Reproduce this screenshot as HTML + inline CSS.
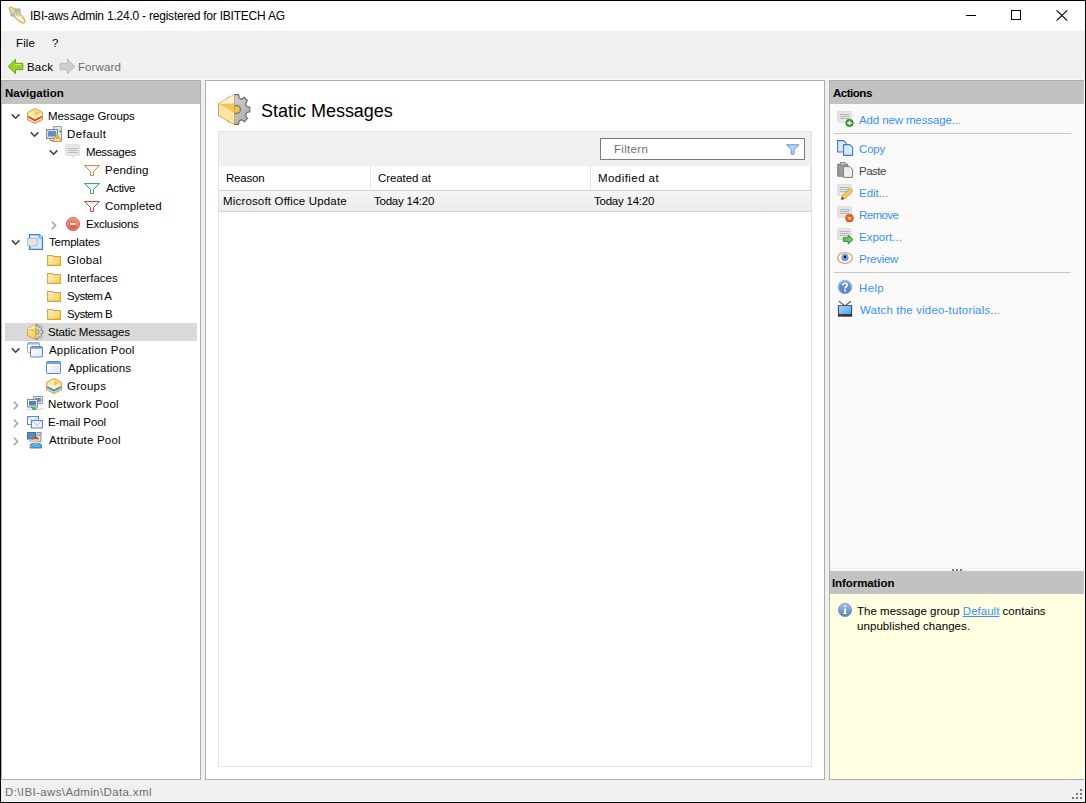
<!DOCTYPE html>
<html><head><meta charset="utf-8">
<style>
*{margin:0;padding:0;box-sizing:border-box}
html,body{width:1086px;height:803px;overflow:hidden}
body{position:relative;background:#f0f0f0;font-family:"Liberation Sans",sans-serif;font-size:11.5px;color:#000}
.a{position:absolute}
.t{position:absolute;white-space:nowrap;line-height:16px;font-size:11.5px}
.b{font-weight:bold}
svg.ov{position:absolute;overflow:visible}
</style></head><body>
<!-- title bar -->
<div class="a" style="left:1px;top:1px;width:1084px;height:30px;background:#fff"></div>

<div class="t" style="left:30px;top:8px;letter-spacing:-0.221px;font-size:12px;">IBI-aws Admin 1.24.0 - registered for IBITECH AG</div>

<div class="a" style="left:966px;top:15px;width:10px;height:1px;background:#000"></div>
<div class="a" style="left:1011px;top:10px;width:10px;height:10px;border:1px solid #000"></div>
<svg class="ov" style="left:1056px;top:10px" width="12" height="11" viewBox="0 0 12 11"><path d="M0.6 0.4L11.2 10.6M11.2 0.4L0.6 10.6" stroke="#000" stroke-width="1.15" fill="none"/></svg>

<div class="t" style="left:16px;top:35px;letter-spacing:0.133px;">File</div>
<div class="t" style="left:52px;top:35px;letter-spacing:0px;">?</div>
<div class="t" style="left:27px;top:59px;letter-spacing:0.167px;">Back</div>
<div class="t" style="left:78px;top:59px;letter-spacing:0.1px;color:#6d6d6d;">Forward</div>

<div class="a" style="left:1px;top:79px;width:1083px;height:1px;background:#f8f8f8"></div>
<!-- NAV PANEL -->
<div class="a" style="left:1px;top:80px;width:200px;height:700px;border:1px solid #acacac;background:#fff"></div>
<div class="a" style="left:2px;top:81px;width:198px;height:23px;background:#c2c2c2"></div>
<div class="a" style="left:5px;top:323px;width:192px;height:18px;background:#d9d9d9"></div>

<div class="t" style="left:5px;top:85px;letter-spacing:-0.011px;font-weight:bold;">Navigation</div>
<div class="t" style="left:48px;top:108px;letter-spacing:-0.054px;">Message Groups</div>
<div class="t" style="left:67px;top:126px;letter-spacing:0.417px;">Default</div>
<div class="t" style="left:86px;top:144px;letter-spacing:-0.314px;">Messages</div>
<div class="t" style="left:105px;top:162px;letter-spacing:0.217px;">Pending</div>
<div class="t" style="left:106px;top:180px;letter-spacing:-0.38px;">Active</div>
<div class="t" style="left:105px;top:198px;letter-spacing:0.138px;">Completed</div>
<div class="t" style="left:86px;top:216px;letter-spacing:-0.233px;">Exclusions</div>
<div class="t" style="left:49px;top:234px;letter-spacing:-0.188px;">Templates</div>
<div class="t" style="left:67px;top:252px;letter-spacing:0.32px;">Global</div>
<div class="t" style="left:67px;top:270px;letter-spacing:0.033px;">Interfaces</div>
<div class="t" style="left:67px;top:288px;letter-spacing:-0.514px;">System A</div>
<div class="t" style="left:67px;top:306px;letter-spacing:-0.514px;">System B</div>
<div class="t" style="left:48px;top:324px;letter-spacing:-0.171px;">Static Messages</div>
<div class="t" style="left:49px;top:342px;letter-spacing:0.193px;">Application Pool</div>
<div class="t" style="left:68px;top:360px;letter-spacing:0.1px;">Applications</div>
<div class="t" style="left:67px;top:378px;letter-spacing:0.26px;">Groups</div>
<div class="t" style="left:48px;top:396px;letter-spacing:0.2px;">Network Pool</div>
<div class="t" style="left:48px;top:414px;letter-spacing:-0.07px;">E-mail Pool</div>
<div class="t" style="left:49px;top:432px;letter-spacing:0.192px;">Attribute Pool</div>

<!-- MAIN PANEL -->
<div class="a" style="left:205px;top:80px;width:620px;height:700px;border:1px solid #acacac;background:#fff"></div>

<div class="t" style="left:261px;top:100px;letter-spacing:-0.014px;font-size:18px;line-height:22px;">Static Messages</div>

<div class="a" style="left:218px;top:131px;width:594px;height:636px;border:1px solid #e3e3e3;background:#fff"></div>
<div class="a" style="left:219px;top:132px;width:592px;height:34px;background:#f0f0f0"></div>
<div class="a" style="left:600px;top:138px;width:205px;height:22px;border:1px solid #7a7a7a;background:#fff"></div>
<div class="a" style="left:219px;top:190px;width:592px;height:1px;background:#d5d5d5"></div>
<div class="a" style="left:370px;top:166px;width:1px;height:24px;background:#e5e5e5"></div>
<div class="a" style="left:590px;top:166px;width:1px;height:24px;background:#e5e5e5"></div>
<div class="a" style="left:810px;top:166px;width:1px;height:24px;background:#e5e5e5"></div>
<div class="a" style="left:219px;top:191px;width:592px;height:20px;background:linear-gradient(#f5f5f5,#ececec)"></div>
<div class="a" style="left:219px;top:211px;width:592px;height:1px;background:#d5d5d5"></div>

<div class="t" style="left:614px;top:141px;letter-spacing:0.317px;color:#6d6d6d;">Filtern</div>
<div class="t" style="left:226px;top:170px;letter-spacing:-0.2px;">Reason</div>
<div class="t" style="left:378px;top:170px;letter-spacing:-0.089px;">Created at</div>
<div class="t" style="left:598px;top:170px;letter-spacing:0.44px;">Modified at</div>
<div class="t" style="left:223px;top:193px;letter-spacing:0.168px;">Microsoft Office Update</div>
<div class="t" style="left:374px;top:193px;letter-spacing:-0.23px;">Today 14:20</div>
<div class="t" style="left:594px;top:193px;letter-spacing:-0.23px;">Today 14:20</div>

<!-- ACTIONS PANEL -->
<div class="a" style="left:829px;top:80px;width:256px;height:700px;border:1px solid #acacac;border-right:none;background:#fafafa"></div>
<div class="a" style="left:830px;top:81px;width:254px;height:23px;background:#c2c2c2"></div>
<div class="a" style="left:834px;top:133px;width:237px;height:1px;background:#c8c8c8"></div>
<div class="a" style="left:834px;top:272px;width:237px;height:1px;background:#c8c8c8"></div>

<div class="t" style="left:833px;top:85px;letter-spacing:-0.483px;font-weight:bold;">Actions</div>
<div class="t" style="left:859px;top:112px;letter-spacing:-0.129px;color:#3892f8;">Add new message...</div>
<div class="t" style="left:859px;top:141px;letter-spacing:-0.167px;color:#3892f8;">Copy</div>
<div class="t" style="left:859px;top:163px;letter-spacing:-0.5px;color:#444;">Paste</div>
<div class="t" style="left:859px;top:185px;letter-spacing:-0.033px;color:#3892f8;">Edit...</div>
<div class="t" style="left:859px;top:207px;letter-spacing:-0.58px;color:#3892f8;">Remove</div>
<div class="t" style="left:859px;top:229px;letter-spacing:0.013px;color:#3892f8;">Export...</div>
<div class="t" style="left:859px;top:251px;letter-spacing:-0.25px;color:#3892f8;">Preview</div>
<div class="t" style="left:859px;top:280px;letter-spacing:0.367px;color:#3892f8;">Help</div>
<div class="t" style="left:860px;top:302px;letter-spacing:0.167px;color:#3892f8;">Watch the video-tutorials...</div>

<div class="a" style="left:830px;top:567px;width:254px;height:4px;background:#f5f5f5"></div>
<div class="a" style="left:830px;top:571px;width:254px;height:23px;background:#c2c2c2"></div>
<div class="a" style="left:830px;top:594px;width:254px;height:185px;background:#ffffe1"></div>
<div class="a" style="left:830px;top:779px;width:254px;height:1px;background:#acacac"></div>

<div class="t" style="left:832px;top:575px;letter-spacing:-0.08px;font-weight:bold;">Information</div>
<div class="t" style="left:857px;top:603px;letter-spacing:0.018px;">The message group <span style="color:#3892f8;text-decoration:underline">Default</span> contains</div>
<div class="t" style="left:857px;top:618px;letter-spacing:0.063px;">unpublished changes.</div>
<div class="t" style="left:5px;top:784px;letter-spacing:0.379px;color:#6d6d6d;">D:\IBI-aws\Admin\Data.xml</div>

<!-- window frame -->
<div class="a" style="left:0;top:0;width:1086px;height:803px;border:1px solid #000"></div>
<div class="a" style="left:1084px;top:80px;width:1px;height:722px;background:#fff"></div>
<div class="a" style="left:1px;top:801px;width:1084px;height:1px;background:#fff"></div>
<!--ICONS--><svg class="ov" style="left:0;top:0" width="1086" height="803" viewBox="0 0 1086 803">
<defs>
<linearGradient id="gGold" x1="0" y1="0" x2="0" y2="1"><stop offset="0" stop-color="#fff6d0"/><stop offset="1" stop-color="#f2c450"/></linearGradient>
<linearGradient id="gFold" x1="0" y1="0" x2="1" y2="1"><stop offset="0" stop-color="#fffbe8"/><stop offset="1" stop-color="#f5cc30"/></linearGradient>
<linearGradient id="gRed" x1="0" y1="0" x2="0" y2="1"><stop offset="0" stop-color="#f4907e"/><stop offset="1" stop-color="#e04a3a"/></linearGradient>
<linearGradient id="gBlueBall" x1="0" y1="0" x2="0" y2="1"><stop offset="0" stop-color="#a9c4e4"/><stop offset="1" stop-color="#4e7fbf"/></linearGradient>
<linearGradient id="gWin" x1="0" y1="0" x2="1" y2="1"><stop offset="0" stop-color="#ffffff"/><stop offset="1" stop-color="#dfe6f2"/></linearGradient>
<linearGradient id="gTV" x1="0" y1="0" x2="1" y2="1"><stop offset="0" stop-color="#9fd4ff"/><stop offset="1" stop-color="#4aa6f0"/></linearGradient>

<g id="hexred">
 <path d="M8 0.6L15.4 4.6V11.6L8 15.4L0.6 11.6V4.6Z" fill="#fff3cc" stroke="#daa443" stroke-width="1.2"/>
 <path d="M1.2 4.8L8 1.2L14.8 4.8L8 8.6Z" fill="#fbe7a0"/><path d="M8 2.5L13.5 5L8 8Z" fill="#f3c850"/>
 <path d="M1.2 7.8L8 11.2L14.8 7.8V9.8L8 13.4L1.2 9.8Z" fill="#d64a36"/>
</g>
<g id="hexblue">
 <path d="M8 0.6L15.4 4.6V11.6L8 15.4L0.6 11.6V4.6Z" fill="#fff3cc" stroke="#daa443" stroke-width="1.2"/>
 <path d="M1.2 4.8L8 1.2L14.8 4.8L8 8.6Z" fill="#fbe7a0"/><path d="M8 2.5L13.5 5L8 8Z" fill="#f3c850"/>
 <path d="M1.2 8L8 11.6L14.8 8V10.2L8 13.8L1.2 10.2Z" fill="#2f9ad6"/>
</g>
<g id="computer">
 <rect x="7.5" y="0.5" width="8" height="14" rx="0.5" fill="#e4e4e4" stroke="#9a9a9a"/>
 <rect x="0.5" y="3.5" width="11" height="9" fill="#dcdcdc" stroke="#8c8c8c"/>
 <rect x="2" y="5" width="8" height="5.5" fill="#5d8fd0"/>
 <path d="M4 12.5V14.5H8" stroke="#8c8c8c" fill="none"/>
 <path d="M11 8L15.5 15.5H6.5Z" fill="#fbe27a" stroke="#d9903a" stroke-width="1"/>
 <rect x="10.6" y="10.5" width="0.9" height="2.5" fill="#7a5a20"/>
 <circle cx="14.2" cy="5.5" r="0.9" fill="#44b044"/>
</g>
<g id="bubble">
 <path d="M1.5 0.5H13.5A1 1 0 0 1 14.5 1.5V10.5A1 1 0 0 1 13.5 11.5H9.5L7 14.5V11.5H1.5A1 1 0 0 1 0.5 10.5V1.5A1 1 0 0 1 1.5 0.5Z" fill="#e9e9e9" stroke="#dedede"/>
 <path d="M2.5 4.5H12.5M2.5 6.5H12.5M2.5 8.5H12.5" stroke="#b4b4b4" stroke-width="0.9"/>
</g>
<g id="funnelO"><path d="M0.5 3.5H15.5L9.5 9.5V13.5H6.5V9.5Z" fill="#fdf6f0" stroke="#d08848" stroke-width="1"/></g>
<g id="funnelG"><path d="M0.5 3.5H15.5L9.5 9.5V13.5H6.5V9.5Z" fill="#f0fbf4" stroke="#3aa86a" stroke-width="1"/></g>
<g id="funnelR"><path d="M0.5 3.5H15.5L9.5 9.5V13.5H6.5V9.5Z" fill="#fdf2f2" stroke="#c04848" stroke-width="1"/></g>
<g id="nogo">
 <circle cx="8" cy="8" r="6.6" fill="url(#gRed)" stroke="#e06a5e" stroke-width="1"/>
 <circle cx="8" cy="8" r="5.4" fill="none" stroke="#f7b0a6" stroke-width="0.6"/>
 <rect x="4.9" y="7" width="6.2" height="2" fill="#fff"/>
</g>
<g id="templ">
 <path d="M2.5 0.7H12.5L15.5 3.7V15.3H2.5Z" fill="#d6e8fb" stroke="#3e80d6" stroke-width="1.2"/>
 <path d="M12.2 0.7V4H15.5" fill="#eef5fd" stroke="#3e80d6" stroke-width="0.8"/>
 <path d="M0.5 4.5H10.2V11.5H6L3.5 14.2V11.5H0.5Z" fill="#e6e6e6" stroke="#bdbdbd" stroke-width="1"/>
</g>
<g id="folder" transform="translate(1,0)">
 <path d="M0.6 3.6H5.5L6.5 4.6H13.4V13.4H0.6Z" fill="url(#gFold)" stroke="#e1a23a" stroke-width="1.1"/>
 <path d="M1.2 7H13" stroke="#f2d78a" stroke-width="0.8"/>
</g>
<g id="cubegear">
 <path d="M14.4 6.5L16.1 6.7L16.1 9.3L14.4 9.5L14.0 10.7L15.1 12.3L13.6 14.1L12.2 12.8L11.3 13.3L11.1 15.3L8.9 15.3L8.7 13.3L7.8 12.8L6.4 14.1L4.9 12.3L6.0 10.7L5.6 9.5L3.9 9.3L3.9 6.7L5.6 6.5L6.0 5.3L4.9 3.7L6.4 1.9L7.8 3.2L8.7 2.7L8.9 0.7L11.1 0.7L11.3 2.7L12.2 3.2L13.6 1.9L15.1 3.7L14.0 5.3Z" fill="#cfcfcf" stroke="#707070" stroke-width="0.8"/>
 <ellipse cx="10" cy="8" rx="2" ry="2.4" fill="#f0c040" stroke="#8a8a8a" stroke-width="0.7"/>
 <path d="M0.6 4.6L8.4 0.6V15.5L0.6 11.6Z" fill="url(#gGold)" stroke="#daa443" stroke-width="1"/>
 <path d="M1 4.8L8 1.2V4.6Z" fill="#fdf3d6"/>
 <path d="M1 4.9L8 4.7V9.6Z" fill="#f2c85c"/>
</g>
<g id="windows">
 <rect x="0.5" y="0.5" width="12" height="10" rx="1" fill="#fff" stroke="#8eaedc"/>
 <rect x="1" y="1" width="11" height="1.6" fill="#9cbbe6"/>
 <rect x="3.5" y="4.5" width="12" height="10.5" rx="1" fill="url(#gWin)" stroke="#5c86c6"/>
 <rect x="4" y="5" width="11" height="1.8" fill="#7aa0d8"/>
</g>
<g id="window">
 <rect x="0.5" y="1.5" width="14" height="12" rx="1" fill="url(#gWin)" stroke="#5c86c6"/>
 <rect x="1" y="2" width="13" height="2" fill="#7aa0d8"/>
</g>
<g id="network">
 <rect x="6.5" y="0.5" width="9" height="7" fill="#e8e8e8" stroke="#9a9a9a"/>
 <rect x="8" y="2" width="6" height="4" fill="#5d8fd0"/>
 <rect x="0.5" y="3.5" width="10" height="7.5" fill="#ececec" stroke="#8a8a8a"/>
 <rect x="2" y="5" width="7" height="4.5" fill="#4f80c4"/>
 <path d="M4 11.5H7" stroke="#8a8a8a"/>
 <rect x="0" y="12.5" width="16" height="1.5" fill="#d6dde2"/>
 <rect x="5" y="11.5" width="4.5" height="2.5" fill="#45b87a"/>
</g>
<g id="email">
 <rect x="0.5" y="2.5" width="11" height="8" fill="#eef3fb" stroke="#5a88cc"/>
 <path d="M1 3L6 7L11 3" stroke="#9ab6e0" fill="none" stroke-width="0.8"/>
 <rect x="4.5" y="6.5" width="11" height="7.5" fill="#eef3fb" stroke="#5a88cc"/>
 <path d="M5 7L10 11L15 7" stroke="#9ab6e0" fill="none" stroke-width="0.8"/>
</g>
<g id="person">
 <rect x="0.5" y="0.5" width="8" height="6.5" fill="#5a8ccc" stroke="#4d6f9e"/>
 <rect x="2" y="8" width="6" height="2" fill="#cfcfcf"/>
 <rect x="10" y="0.5" width="4" height="9" fill="#e0e0e0" stroke="#8a8a8a"/>
 <circle cx="12.6" cy="2.8" r="0.9" fill="#4cb84c"/>
 <path d="M3.2 16V13.4C3.2 11.8 5 11 8.6 11C12.2 11 14.4 11.8 14.4 13.4V16Z" fill="#4ab4f0" stroke="#2d5faa" stroke-width="0.8"/>
 <circle cx="8.6" cy="8.5" r="3.1" fill="#f4c69a"/>
 <path d="M5.4 8C5.4 5.8 6.8 5 8.6 5C10.4 5 11.8 5.8 11.8 8L10.5 7H6.8Z" fill="#a05a28"/>
 <rect x="2.6" y="14.5" width="1.6" height="1.5" fill="#f08a30"/>
</g>
<g id="msgbub">
 <path d="M1.5 0.5H13.5A1 1 0 0 1 14.5 1.5V10.5A1 1 0 0 1 13.5 11.5H1.5A1 1 0 0 1 0.5 10.5V1.5A1 1 0 0 1 1.5 0.5Z" fill="#e6e6e6" stroke="#dedede"/>
 <path d="M2.5 3.5H12.5M2.5 5.5H12.5M2.5 7.5H12.5" stroke="#b0b0b0" stroke-width="0.9"/>
</g>
</defs>

<path d="M11.8 114.4L15.6 118.2L19.4 114.4" stroke="#404040" stroke-width="1.5" fill="none"/>
<use href="#hexred" x="27" y="108"/>
<path d="M30.8 132.4L34.6 136.2L38.4 132.4" stroke="#404040" stroke-width="1.5" fill="none"/>
<use href="#computer" x="46" y="126"/>
<path d="M49.8 150.4L53.6 154.2L57.4 150.4" stroke="#404040" stroke-width="1.5" fill="none"/>
<use href="#bubble" x="65" y="144"/>
<use href="#funnelO" x="84" y="162"/>
<use href="#funnelG" x="84" y="180"/>
<use href="#funnelR" x="84" y="198"/>
<path d="M51.8 221.6L55.6 225.4L51.8 229.2" stroke="#a6a6a6" stroke-width="1.5" fill="none"/>
<use href="#nogo" x="65" y="216"/>
<path d="M11.8 240.4L15.6 244.2L19.4 240.4" stroke="#404040" stroke-width="1.5" fill="none"/>
<use href="#templ" x="27" y="234"/>
<use href="#folder" x="46" y="252"/>
<use href="#folder" x="46" y="270"/>
<use href="#folder" x="46" y="288"/>
<use href="#folder" x="46" y="306"/>
<use href="#cubegear" x="27" y="324"/>
<path d="M11.8 348.4L15.6 352.2L19.4 348.4" stroke="#404040" stroke-width="1.5" fill="none"/>
<use href="#windows" x="27" y="342"/>
<use href="#window" x="46" y="360"/>
<use href="#hexblue" x="46" y="378"/>
<path d="M13.8 401.6L17.6 405.4L13.8 409.2" stroke="#a6a6a6" stroke-width="1.5" fill="none"/>
<use href="#network" x="27" y="396"/>
<path d="M13.8 419.6L17.6 423.4L13.8 427.2" stroke="#a6a6a6" stroke-width="1.5" fill="none"/>
<use href="#email" x="27" y="414"/>
<path d="M13.8 437.6L17.6 441.4L13.8 445.2" stroke="#a6a6a6" stroke-width="1.5" fill="none"/>
<use href="#person" x="27" y="432"/>

<!-- title icon -->
<g transform="translate(8.5,6.5)">
 <rect x="2.5" y="2.5" width="9" height="7" fill="#a9c6e6" stroke="#7d9cbf" stroke-width="0.8"/>
 <path d="M5 8.5L7 4L9 8.5" stroke="#8a7020" stroke-width="1.3" fill="none"/>
 <ellipse cx="8.6" cy="8.6" rx="10.6" ry="3" transform="rotate(45 8.6 8.6)" fill="#fff5dc" fill-opacity="0.55" stroke="#e9b04c" stroke-width="1.3"/>
</g>
<!-- back arrow -->
<path d="M8.2 66.5L15.5 59.3V63.3H22.8V69.7H15.5V73.7Z" fill="#98d420" stroke="#62a614" stroke-width="1" stroke-linejoin="round"/>
<path d="M15 64.5H21" stroke="#c8f070" stroke-width="1"/>
<!-- forward arrow -->
<path d="M74.8 66.5L67.5 59.3V63.3H60.2V69.7H67.5V73.7Z" fill="#cfcfcf" stroke="#b9b9b9" stroke-width="1" stroke-linejoin="round"/>
<!-- main title icon 32px at 218,93 -->
<g transform="translate(218,93)">
 <defs><linearGradient id="gGear" x1="0" y1="0" x2="1" y2="1"><stop offset="0" stop-color="#dcdcdc"/><stop offset="1" stop-color="#a9a9a9"/></linearGradient></defs>
 <path d="M28.6 13.5L31.8 14.1L31.8 18.9L28.6 19.5L27.6 22.4L29.4 25.4L26.4 28.7L23.8 26.7L21.2 27.9L20.6 31.4L16.4 31.4L15.8 27.9L13.3 26.7L10.6 28.7L7.6 25.4L9.4 22.4L8.4 19.5L5.2 18.9L5.2 14.1L8.4 13.5L9.4 10.6L7.6 7.6L10.6 4.3L13.2 6.3L15.8 5.1L16.4 1.6L20.6 1.6L21.2 5.1L23.8 6.3L26.4 4.3L29.4 7.6L27.6 10.6Z" fill="url(#gGear)" stroke="#6a6a6a" stroke-width="1.1"/>
 <circle cx="18.5" cy="16.5" r="4" fill="#f4c040" stroke="#7a7a7a" stroke-width="1.4"/>
 <path d="M0.6 10.8L16.2 1.6V31.4L0.6 22.4Z" fill="url(#gGold)" stroke="#d9a040" stroke-width="1.1"/>
 <path d="M1 10.8L16 1.8V10.4Z" fill="#fdf3d6"/>
 <path d="M1 11L16 10.4V19.6Z" fill="#f3c45e"/>
 <path d="M1 11.2L16 19.8V31L1 22.2Z" fill="#fde6a4"/>
</g>
<!-- filter funnel -->
<path d="M786.5 144.8H798.8L794 149.6V154.2H791.3V149.6Z" fill="#b9d6f6" stroke="#5c92d8" stroke-width="1" stroke-linejoin="round"/>
<!-- actions icons -->
<use href="#msgbub" x="837" y="111"/>
<circle cx="849.5" cy="123" r="3.8" fill="#3c9a3c" stroke="#2b7a2b" stroke-width="0.6"/>
<path d="M847.3 123H851.7M849.5 120.8V125.2" stroke="#fff" stroke-width="1.3"/>
<g transform="translate(837,140)">
 <path d="M0.6 0.6H6.6L9.4 3.4V12H0.6Z" fill="#dce9f9" stroke="#3b7ad0" stroke-width="1.1"/>
 <path d="M6.6 4.6H12.8L15.6 7.4V15.4H6.6Z" fill="#dce9f9" stroke="#3b7ad0" stroke-width="1.1"/>
</g>
<g transform="translate(837,162)">
 <path d="M0.8 2.2H10.8V14.2H0.8Z" fill="#9c9c9c" stroke="#707070" stroke-width="1"/>
 <rect x="3.5" y="0.6" width="4.6" height="2.4" fill="#d0d0d0" stroke="#777" stroke-width="0.7"/>
 <path d="M6.4 4.6H12.8L15.6 7.4V15.4H6.4Z" fill="#ededed" stroke="#7a7a7a" stroke-width="1"/>
</g>
<use href="#msgbub" x="837" y="184"/>
<g transform="translate(837,184)">
 <path d="M4.2 15.6L5 12.4L13.2 4.4L15.6 6.8L7.6 14.8Z" fill="#f3d64a" stroke="#c98a30" stroke-width="0.9"/>
 <path d="M4.2 15.6L5 12.4L7.6 14.8Z" fill="#7a4a20"/>
</g>
<use href="#msgbub" x="837" y="206"/>
<circle cx="849.5" cy="218.2" r="3.9" fill="#e6621e" stroke="#c24a10" stroke-width="0.6"/>
<path d="M848 216.7L851 219.7M851 216.7L848 219.7" stroke="#fff" stroke-width="0.9"/>
<use href="#msgbub" x="837" y="228"/>
<path d="M843.4 237.8H848.2V235.2L853 239.6L848.2 244V241.4H843.4Z" fill="#7cc06a" stroke="#2c8a2c" stroke-width="1" stroke-linejoin="round"/>
<g transform="translate(837,250)">
 <ellipse cx="8" cy="8" rx="7.4" ry="5.4" fill="#fbfbfb" stroke="#e0a070" stroke-width="1.3"/>
 <circle cx="8" cy="7.4" r="3.6" fill="#6e9ce6"/>
 <circle cx="8" cy="7" r="1.2" fill="#000"/>
</g>
<g transform="translate(837,279)">
 <circle cx="8" cy="8" r="6.8" fill="url(#gBlueBall)" stroke="#8fb0da" stroke-width="1"/>
 <circle cx="8" cy="8" r="5.2" fill="#5d8ac8"/>
 <path d="M5.9 6.4C5.9 3.6 10.2 3.6 10.2 6.2C10.2 7.8 8.1 7.9 8.1 9.4" stroke="#fff" stroke-width="1.7" fill="none"/>
 <rect x="7.1" y="10.6" width="2" height="1.8" fill="#fff"/>
</g>
<g transform="translate(837,300)">
 <path d="M2 1.2L7.6 5.6M13.8 1.2L8.4 5.6" stroke="#555" stroke-width="1.1"/>
 <rect x="0.9" y="5.2" width="14.2" height="11.5" fill="#353535"/>
 <rect x="1.8" y="6" width="12.4" height="8" fill="url(#gTV)"/>
 <rect x="3" y="14.5" width="1.6" height="1" fill="#e02020"/>
</g>
<!-- info icon -->
<circle cx="845" cy="610" r="6.6" fill="url(#gBlueBall)" stroke="#6d8fc0" stroke-width="0.8"/>
<rect x="844.1" y="608.5" width="1.9" height="4.6" fill="#fff"/>
<rect x="843.2" y="613" width="3.6" height="1" fill="#fff"/>
<rect x="844.2" y="605.5" width="1.7" height="1.7" fill="#fff"/>
<!-- splitter grip -->
<rect x="952" y="569" width="2" height="2" fill="#7a7a7a"/><rect x="956" y="569" width="2" height="2" fill="#7a7a7a"/><rect x="960" y="569" width="2" height="2" fill="#7a7a7a"/>
<!-- status grip -->
<rect x="1080" y="789" width="2" height="2" fill="#7a7a7a"/>
<rect x="1076" y="793" width="2" height="2" fill="#7a7a7a"/><rect x="1080" y="793" width="2" height="2" fill="#7a7a7a"/>
<rect x="1072" y="797" width="2" height="2" fill="#7a7a7a"/><rect x="1076" y="797" width="2" height="2" fill="#7a7a7a"/><rect x="1080" y="797" width="2" height="2" fill="#7a7a7a"/>

</svg><!--/ICONS-->
</body></html>
